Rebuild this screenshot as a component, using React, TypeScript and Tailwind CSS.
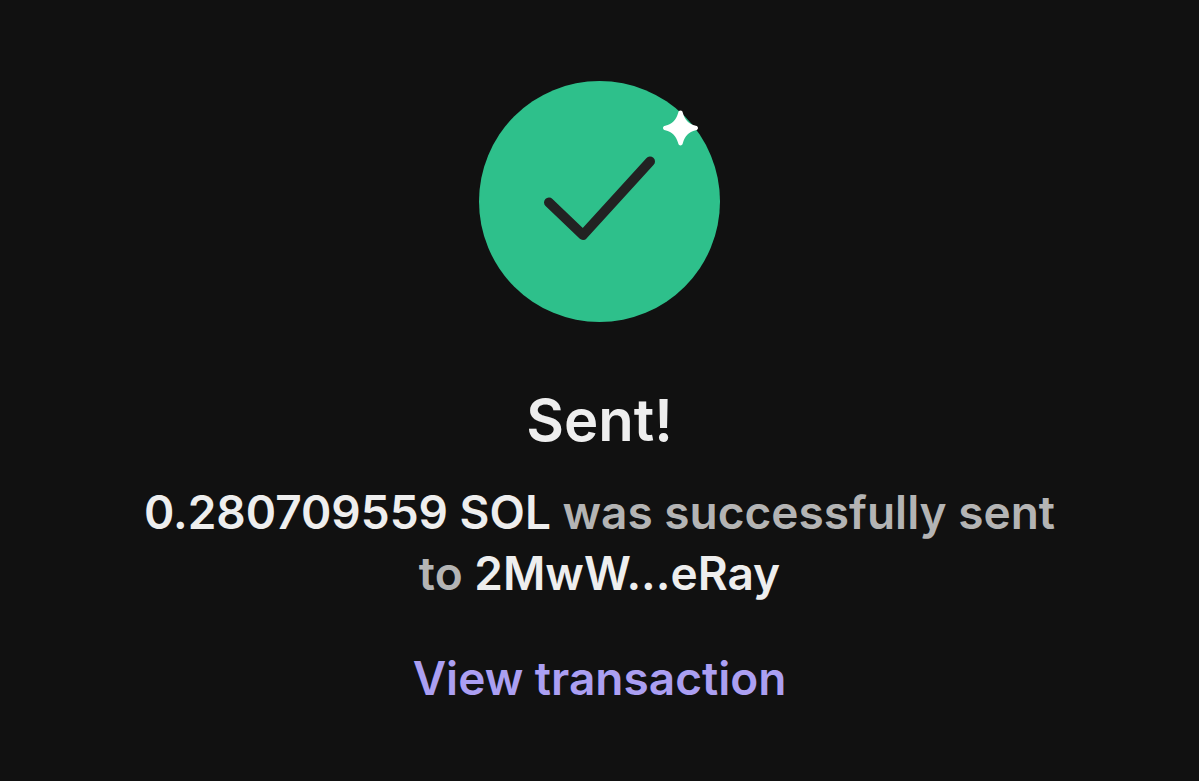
const transfer = {
    amount: '0.280709559 SOL',
    recipient: '2MwW...eRay',
};

const SuccessIcon = () => (
    <svg className="size-[241px]" viewBox="0 0 241 241" fill="none" aria-hidden="true">
        <circle cx="120.5" cy="120.5" r="120.5" fill="#2ec08b" />
        <path d="M70 121.500L104 154L171 80.500" stroke="#222222" strokeWidth="10" strokeLinecap="round" strokeLinejoin="round" />
        <path
            d="M201.500 29.500C202.800 29.500 203.500 30.400 203.800 31.700C205.800 39 209.500 42.700 216.800 44.700C218.100 45 219 45.700 219 47C219 48.300 218.100 49 216.800 49.300C209.500 51.300 205.800 55 203.800 62.300C203.500 63.600 202.800 64.500 201.500 64.500C200.200 64.500 199.500 63.600 199.200 62.300C197.200 55 193.500 51.300 186.200 49.300C184.900 49 184 48.300 184 47C184 45.700 184.900 45 186.200 44.700C193.500 42.700 197.200 39 199.200 31.700C199.500 30.400 200.200 29.500 201.500 29.500Z"
            fill="#ffffff"
        />
    </svg>
);

export default function App() {
    return (
        <main className="min-h-screen bg-[#111111] px-32 pt-[81px] pb-16 flex flex-col items-center text-center font-['Inter',sans-serif] font-semibold">
            <SuccessIcon />
            <h1 className="mt-16 text-[58px] leading-[68px] text-[#eeeeee]">Sent!</h1>
            <p className="mt-7 max-w-[940px] text-[46px] leading-[61px] text-[#b4b4b4]">
                <span className="text-[#eeeeee]">{transfer.amount}</span> was successfully sent to{' '}
                <span className="text-[#eeeeee]">{transfer.recipient}</span>
            </p>
            <a href="#transaction" className="mt-11 text-[46px] leading-[61px] text-[#ab9ff2]">
                View transaction
            </a>
        </main>
    );
}
